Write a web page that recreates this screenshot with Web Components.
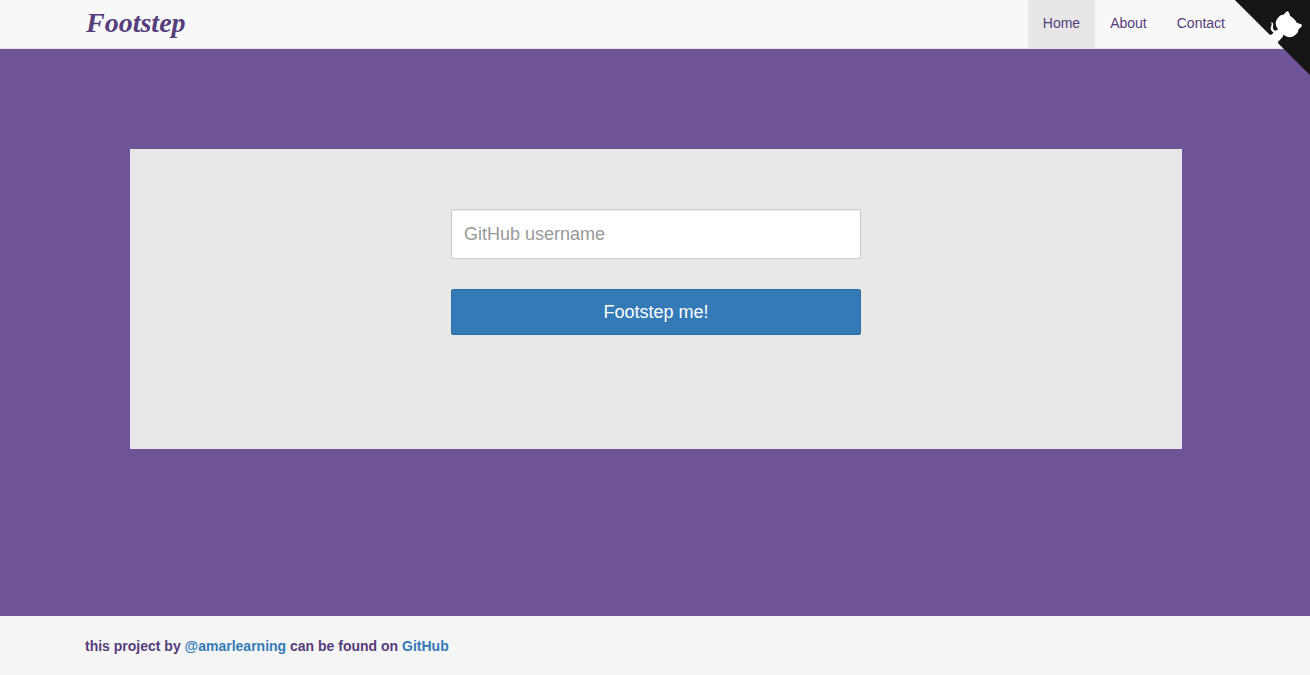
<!DOCTYPE html>
<html lang="en">
<head>
<meta charset="utf-8">
<meta name="viewport" content="width=device-width, initial-scale=1">
<title>Footstep</title>
<style>
  body { margin: 0; font: 14px/20px "Liberation Sans", Arial, sans-serif; color: #563d7c; }
</style>
</head>
<body>
<footstep-app></footstep-app>
<script>
function define(name, html) {
  const template = document.createElement('template');
  template.innerHTML = html;
  customElements.define(name, class extends HTMLElement {
    constructor() {
      super();
      this.attachShadow({ mode: 'open' }).append(template.content.cloneNode(true));
    }
  });
}

define('site-logo', `
  <style>
    :host { display: block; }
    a { color: #563d7c; text-decoration: none; font: italic bold 28px/46px "Liberation Serif", serif; }
  </style>
  <a href="#"><slot></slot></a>`);

customElements.define('nav-link', class extends HTMLElement {
  constructor() {
    super();
    this.attachShadow({ mode: 'open' }).innerHTML = `
      <style>
        :host { display: block; }
        a { display: block; padding: 13px 15px 15px; color: #563d7c; text-decoration: none; }
        :host([active]) a { background: #e7e7e7; }
      </style>
      <a><slot></slot></a>`;
  }
  connectedCallback() {
    const link = this.shadowRoot.querySelector('a');
    link.href = this.getAttribute('href') || '#';
    if (this.hasAttribute('active')) link.setAttribute('aria-current', 'page');
  }
});

define('site-header', `
  <style>
    :host { display: block; background: #f8f8f8; border-bottom: 1px solid #e7e7e7; }
    .bar { display: flex; justify-content: space-between; max-width: 1170px; height: 48px; margin: 0 auto; }
    site-logo { padding-left: 16px; }
    nav { display: flex; }
  </style>
  <div class="bar">
    <site-logo>Footstep</site-logo>
    <nav>
      <nav-link href="#home" active>Home</nav-link>
      <nav-link href="#about">About</nav-link>
      <nav-link href="#contact">Contact</nav-link>
    </nav>
  </div>`);

define('github-corner', `
  <style>
    :host { display: block; position: absolute; top: 0; right: 0; }
    a, svg { display: block; }
  </style>
  <a href="https://github.com" aria-label="View source on GitHub">
    <svg width="77" height="78" viewBox="0 6 241 244" aria-hidden="true">
      <path d="M0,0 L115,115 L130,115 L142,142 L250,250 L250,0 Z" fill="#151513"/>
      <path d="M128.3,109.0 C113.8,99.7 119.0,89.6 119.0,89.6 C122.0,82.7 120.5,78.6 120.5,78.6 C119.2,72.0 123.4,76.3 123.4,76.3 C127.3,80.9 125.5,87.3 125.5,87.3 C122.9,97.6 130.6,101.9 134.4,103.2" fill="#fff"/>
      <path d="M115.0,115.0 C114.9,115.1 118.7,116.5 119.8,115.4 L133.7,101.6 C136.9,99.2 139.9,98.4 142.2,98.6 C133.8,88.0 127.5,74.4 143.8,58.0 C148.5,53.4 154.0,51.2 159.7,51.0 C160.3,49.4 163.2,43.6 171.4,40.1 C171.4,40.1 176.1,42.5 178.8,56.2 C183.1,58.6 187.2,61.8 190.9,65.4 C194.5,69.0 197.7,73.2 200.1,77.6 C213.8,80.2 216.3,84.9 216.3,84.9 C212.7,93.1 206.9,96.0 205.4,96.6 C205.1,102.4 203.0,107.8 198.3,112.5 C181.9,128.9 168.3,122.5 157.7,114.1 C157.9,116.9 156.7,120.9 152.7,124.9 L141.0,136.5 C139.8,137.7 141.6,141.9 141.8,141.8 Z" fill="#fff"/>
    </svg>
  </a>`);

define('username-form', `
  <style>
    :host { display: block; width: 100%; max-width: 410px; }
    form { display: grid; gap: 30px; margin: 0; }
    input, button { box-sizing: border-box; width: 100%; margin: 0; font: 18px/24px "Liberation Sans", Arial, sans-serif; border-radius: 2px; }
    input { height: 50px; padding: 10px 12px; color: #555; background: #fff; border: 1px solid #ccc; box-shadow: inset 0 1px 1px rgba(0,0,0,.075); }
    input::placeholder { color: #999; opacity: 1; }
    button { height: 46px; padding: 10px 16px; color: #fff; background: #337ab7; border: 1px solid #2e6da4; cursor: pointer; }
  </style>
  <form>
    <input type="text" name="username" aria-label="GitHub username" placeholder="GitHub username">
    <button type="button">Footstep me!</button>
  </form>`);

define('search-panel', `
  <style>
    :host { display: flex; justify-content: center; box-sizing: border-box; min-height: 300px; padding: 60px 16px; background: #e8e8e8; }
  </style>
  <slot></slot>`);

define('site-footer', `
  <style>
    :host { display: block; background: #f5f5f5; }
    p { box-sizing: border-box; max-width: 1170px; margin: 0 auto; padding: 20px 15px 19px; font-weight: bold; }
    a { color: #337ab7; text-decoration: none; }
  </style>
  <p>this project by <a href="https://github.com/amarlearning">@amarlearning</a> can be found on <a href="https://github.com/amarlearning/Footstep">GitHub</a></p>`);

define('footstep-app', `
  <style>
    :host { display: flex; flex-direction: column; min-height: 100vh; position: relative; }
    main { flex: 1; padding: 100px 128px 100px 130px; background: #6f5499; }
  </style>
  <site-header></site-header>
  <main>
    <search-panel><username-form></username-form></search-panel>
  </main>
  <site-footer></site-footer>
  <github-corner></github-corner>`);
</script>
</body>
</html>
